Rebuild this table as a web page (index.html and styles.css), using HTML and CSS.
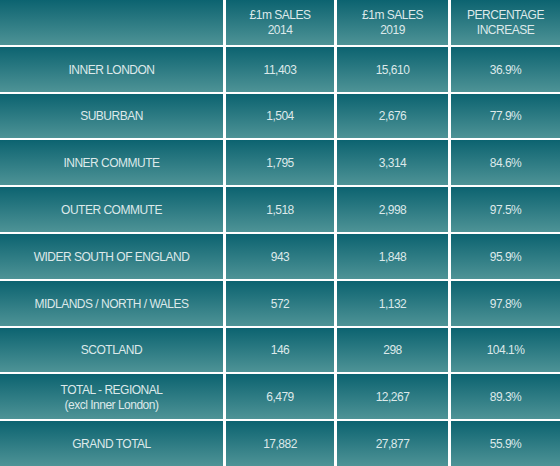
FILE: index.html
```html
<!DOCTYPE html>
<html>
<head>
<meta charset="utf-8">
<link rel="stylesheet" href="styles.css">
</head>
<body>
<div class="table">
  <div class="cell"></div>
  <div class="cell">£1m SALES<br>2014</div>
  <div class="cell">£1m SALES<br>2019</div>
  <div class="cell">PERCENTAGE<br>INCREASE</div>

  <div class="cell">INNER LONDON</div>
  <div class="cell">11,403</div>
  <div class="cell">15,610</div>
  <div class="cell">36.9%</div>

  <div class="cell">SUBURBAN</div>
  <div class="cell">1,504</div>
  <div class="cell">2,676</div>
  <div class="cell">77.9%</div>

  <div class="cell">INNER COMMUTE</div>
  <div class="cell">1,795</div>
  <div class="cell">3,314</div>
  <div class="cell">84.6%</div>

  <div class="cell">OUTER COMMUTE</div>
  <div class="cell">1,518</div>
  <div class="cell">2,998</div>
  <div class="cell">97.5%</div>

  <div class="cell">WIDER SOUTH OF ENGLAND</div>
  <div class="cell">943</div>
  <div class="cell">1,848</div>
  <div class="cell">95.9%</div>

  <div class="cell">MIDLANDS / NORTH / WALES</div>
  <div class="cell">572</div>
  <div class="cell">1,132</div>
  <div class="cell">97.8%</div>

  <div class="cell">SCOTLAND</div>
  <div class="cell">146</div>
  <div class="cell">298</div>
  <div class="cell">104.1%</div>

  <div class="cell">TOTAL - REGIONAL<br>(excl Inner London)</div>
  <div class="cell">6,479</div>
  <div class="cell">12,267</div>
  <div class="cell">89.3%</div>

  <div class="cell">GRAND TOTAL</div>
  <div class="cell">17,882</div>
  <div class="cell">27,877</div>
  <div class="cell">55.9%</div>
</div>
</body>
</html>
```
FILE: styles.css
```css
html, body {
  margin: 0;
  padding: 0;
  background: #ffffff;
}
.table {
  width: 560px;
  height: 466px;
  display: grid;
  grid-template-columns: 223px 108px 111px 109px;
  grid-template-rows: repeat(10, 1fr);
  column-gap: 3px;
  row-gap: 2px;
}
.cell {
  display: flex;
  align-items: center;
  justify-content: center;
  text-align: center;
  padding-top: 2px;
  background: linear-gradient(to bottom, #0c6370 0%, #4e9396 100%);
  color: #dde9ea;
  font-family: "Liberation Sans", Arial, sans-serif;
  font-size: 12px;
  line-height: 15px;
  letter-spacing: -0.5px;
}
```
